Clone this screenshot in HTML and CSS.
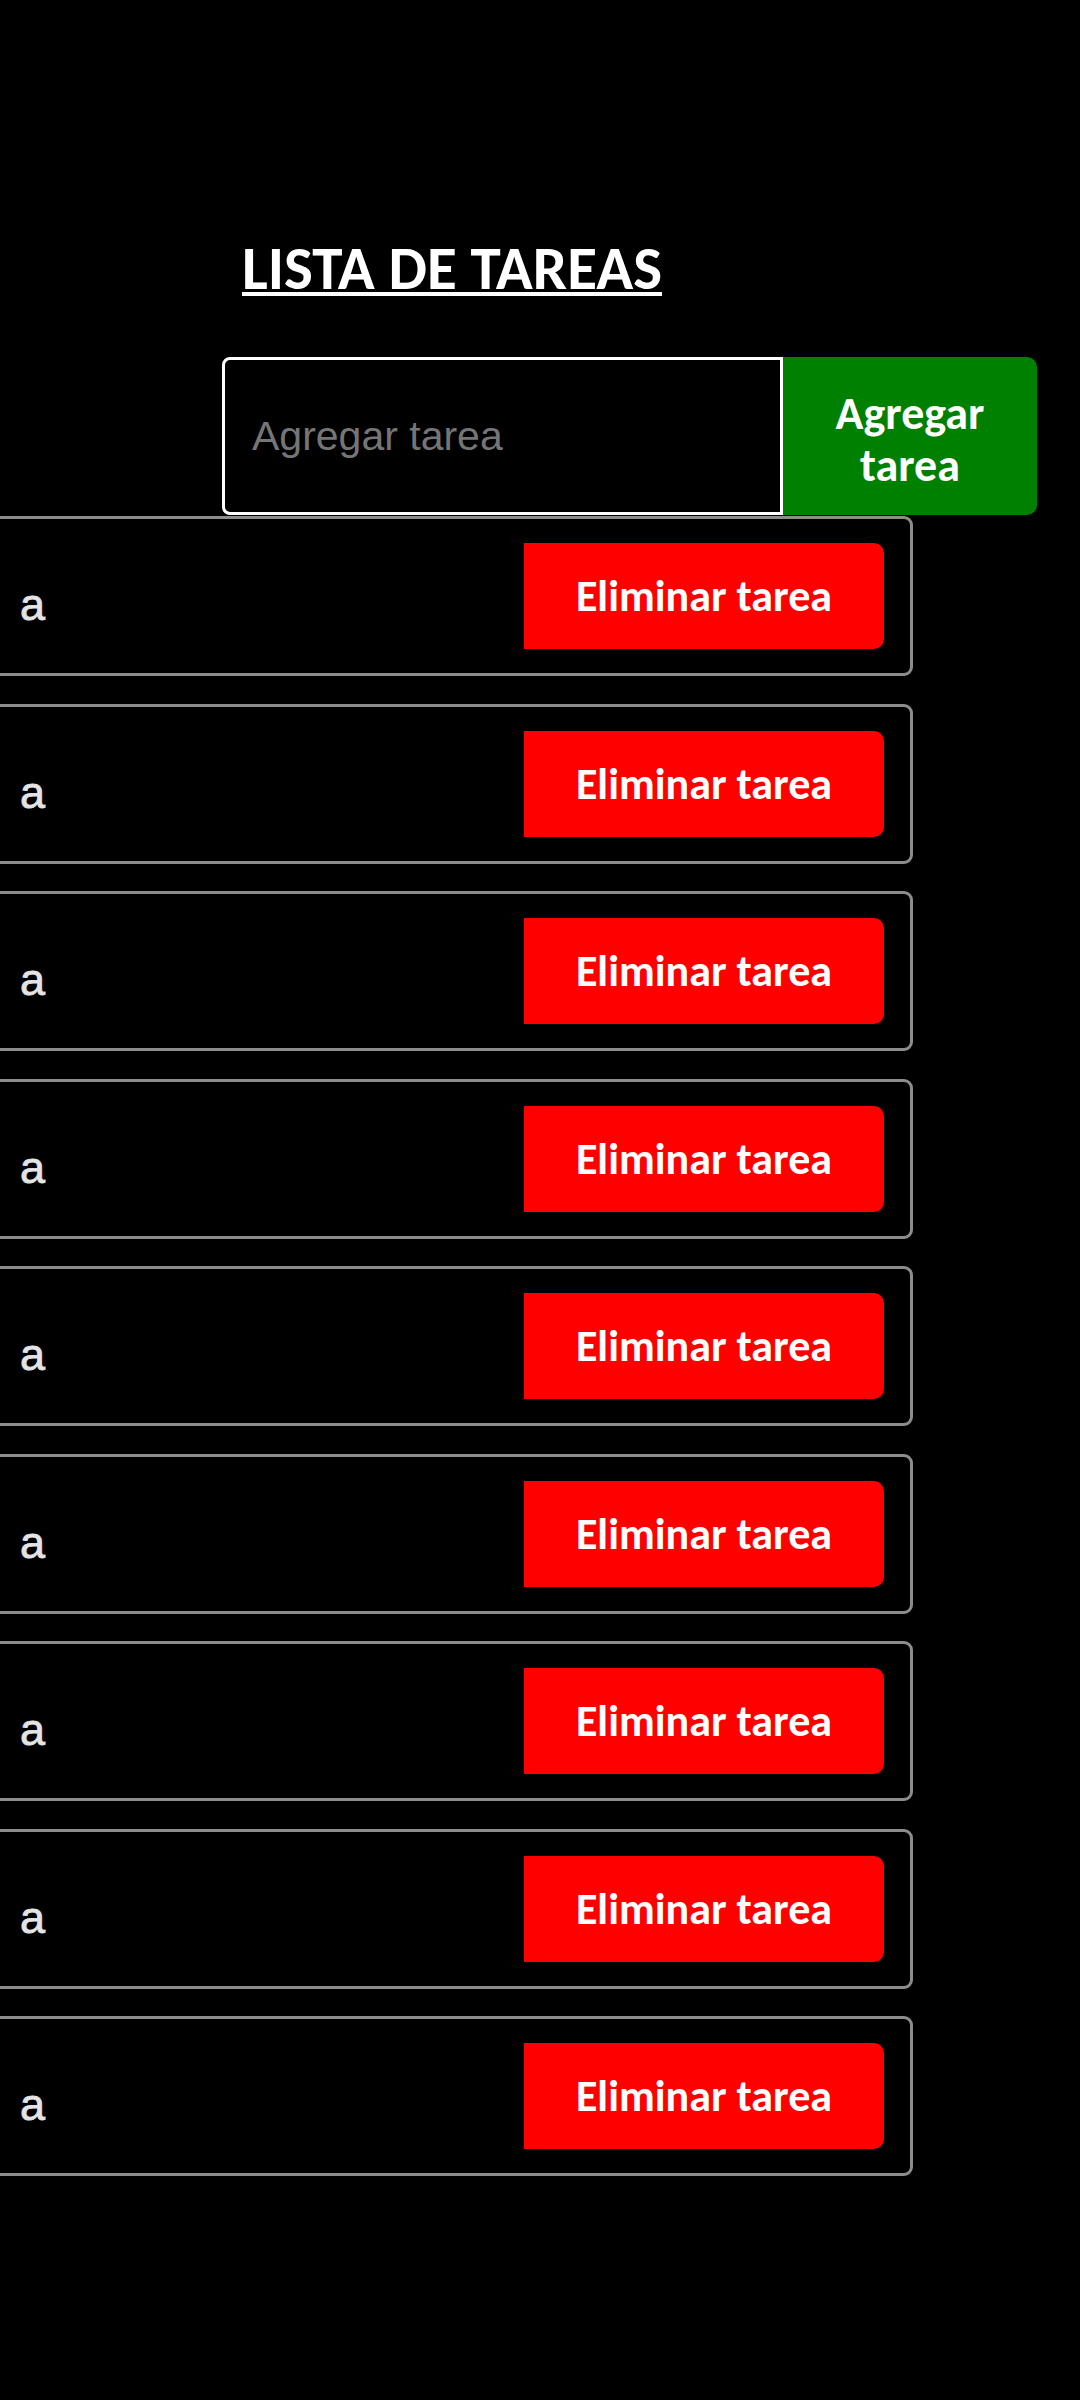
FILE: index.html
```html
<!DOCTYPE html>
<html lang="es">
<head>
<meta charset="utf-8">
<title>Lista de tareas</title>
<link rel="stylesheet" href="styles.css">
</head>
<body>
<main class="app">
  <h1 class="title">LISTA DE TAREAS</h1>
  <form class="add-form">
    <input class="add-input" type="text" placeholder="Agregar tarea">
    <button class="add-btn" type="button">Agregar<br>tarea</button>
  </form>
  <ul class="tasks">
    <li class="task"><span class="task-text">a</span><button class="del-btn" type="button">Eliminar tarea</button></li>
    <li class="task"><span class="task-text">a</span><button class="del-btn" type="button">Eliminar tarea</button></li>
    <li class="task"><span class="task-text">a</span><button class="del-btn" type="button">Eliminar tarea</button></li>
    <li class="task"><span class="task-text">a</span><button class="del-btn" type="button">Eliminar tarea</button></li>
    <li class="task"><span class="task-text">a</span><button class="del-btn" type="button">Eliminar tarea</button></li>
    <li class="task"><span class="task-text">a</span><button class="del-btn" type="button">Eliminar tarea</button></li>
    <li class="task"><span class="task-text">a</span><button class="del-btn" type="button">Eliminar tarea</button></li>
    <li class="task"><span class="task-text">a</span><button class="del-btn" type="button">Eliminar tarea</button></li>
    <li class="task"><span class="task-text">a</span><button class="del-btn" type="button">Eliminar tarea</button></li>
  </ul>
</main>
</body>
</html>
```

FILE: styles.css
```css
html, body {
  margin: 0;
  padding: 0;
  background: #000;
}

body {
  width: 1080px;
  min-height: 2400px;
  overflow: hidden;
  font-family: "Liberation Sans", Arial, sans-serif;
}

.app {
  padding-top: 232px;
}

.title {
  margin: 0 0 0 242px;
  font-family: Carlito, Lato, "Open Sans", sans-serif;
  font-weight: 700;
  font-size: 61px;
  line-height: 72px;
  color: #fff;
  text-decoration: underline;
  text-decoration-thickness: 4px;
  text-underline-offset: 3px;
}

.add-form {
  display: flex;
  margin: 53px 0 0 222px;
  width: 815px;
  height: 158px;
}

.add-input {
  box-sizing: border-box;
  width: 561px;
  height: 100%;
  margin: 0;
  padding: 0 0 0 27px;
  border: 3px solid #fff;
  border-radius: 8px 0 0 8px;
  background: #000;
  color: #fff;
  font-family: "Liberation Sans", Arial, sans-serif;
  font-size: 41px;
  outline: none;
}

.add-input::placeholder {
  color: #757575;
}

.add-btn {
  flex: 1;
  margin: 0;
  padding: 6px 0 0;
  border: none;
  border-radius: 0 10px 10px 0;
  background: #008000;
  color: #fff;
  font-family: Carlito, Lato, "Open Sans", sans-serif;
  font-weight: 700;
  font-size: 46px;
  line-height: 52px;
  text-align: center;
}

.tasks {
  list-style: none;
  margin: 1px 0 0 -40px;
  padding: 0;
  width: 953px;
  display: flex;
  flex-direction: column;
  gap: 27.5px;
}

.task {
  box-sizing: border-box;
  height: 160px;
  display: flex;
  align-items: center;
  justify-content: space-between;
  padding: 0 26px 0 57px;
  border: 3px solid #8c8c8c;
  border-radius: 9px;
}

.task-text {
  margin-top: 18px;
  color: #e4e4e4;
  font-family: "Liberation Sans", Arial, sans-serif;
  font-size: 45px;
  -webkit-text-stroke: 0.8px #e4e4e4;
}

.del-btn {
  width: 360px;
  height: 106px;
  margin: 0;
  padding: 0;
  border: none;
  border-radius: 0 10px 10px 0;
  background: #ff0000;
  color: #fff;
  font-family: Carlito, Lato, "Open Sans", sans-serif;
  font-weight: 700;
  font-size: 44px;
}
```
